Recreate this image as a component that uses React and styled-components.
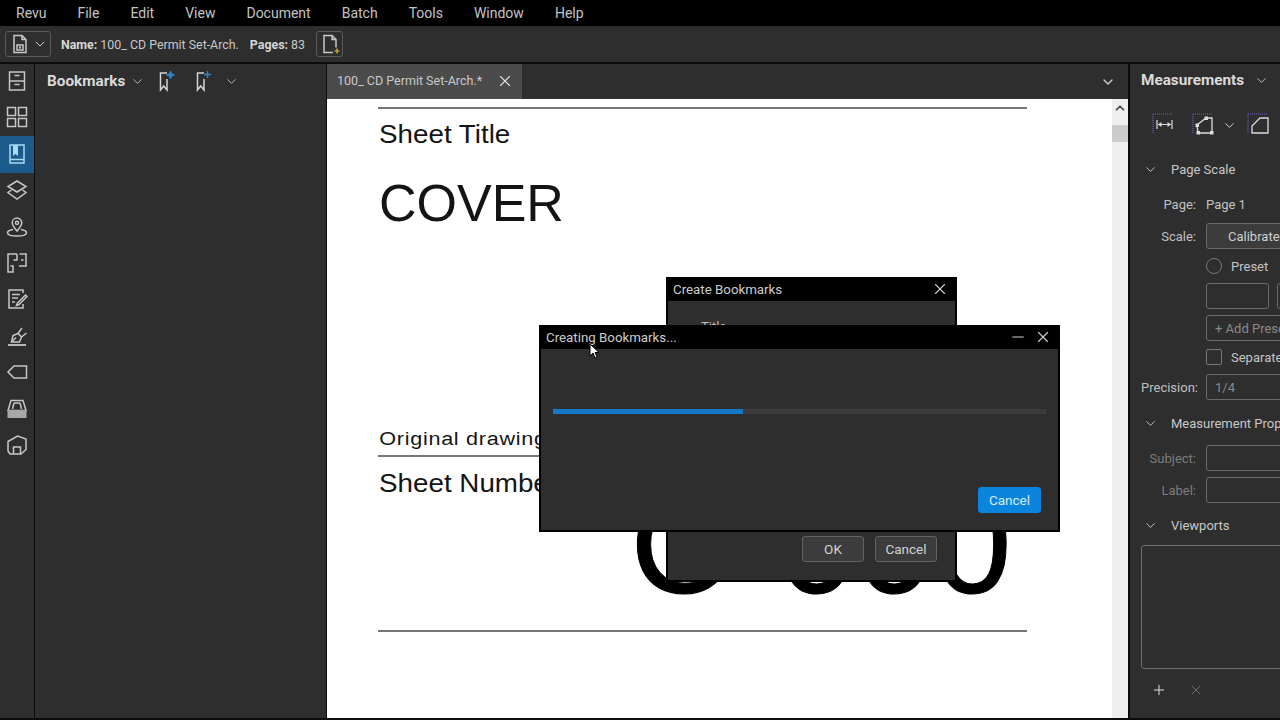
import React from 'react';
import styled, { createGlobalStyle } from 'styled-components';
import { ChevronDown, ChevronUp, X, Plus, Minus } from 'lucide-react';

const GlobalStyle = createGlobalStyle`
  html, body { margin: 0; padding: 0; background: #000; }
  * { box-sizing: border-box; }
`;

const Shell = styled.div`
  position: relative;
  width: 1280px;
  height: 720px;
  overflow: hidden;
  display: flex;
  flex-direction: column;
  background: #0c0c0c;
  color: #cfcfcf;
  font-family: Roboto, "Liberation Sans", sans-serif;
`;

const MenuBar = styled.nav`
  height: 26px;
  background: #000;
  display: flex;
  align-items: center;
  gap: 31px;
  padding: 0 0 0 16px;
  font-size: 14px;
  color: #c4c4c4;
`;

const ToolBar = styled.div`
  height: 36px;
  background: #2e2e2e;
  display: flex;
  align-items: center;
  padding: 0 0 0 5px;
  font-size: 12.4px;
  color: #c8c8c8;
`;

const ToolGroup = styled.div`
  width: ${p => p.$w}px;
  height: 26px;
  border: 1px solid #5a5a5a;
  border-radius: 3px;
  margin-left: ${p => p.$ml || 0}px;
  display: flex;
  align-items: center;
  padding-left: 3px;
  gap: 1px;
`;

const DocInfo = styled.span`
  margin-left: ${p => p.$ml}px;
  white-space: nowrap;
  b { font-weight: 700; color: #d6d6d6; }
`;

const Body = styled.div`
  flex: 1;
  margin: 2px 0;
  display: flex;
  min-height: 0;
`;

const Rail = styled.div`
  width: 34px;
  background: #2e2e2e;
  display: flex;
  flex-direction: column;
`;

const RailItem = styled.div`
  height: ${p => p.$h || 36.4}px;
  padding-bottom: 2px;
  display: flex;
  align-items: center;
  justify-content: center;
  color: ${p => (p.$active ? '#a9d8f5' : '#c6c6c6')};
  background: ${p => (p.$active ? '#1b5a8a' : 'transparent')};
`;

const BookmarksPanel = styled.div`
  width: 291px;
  margin-left: 1px;
  background: #2e2e2e;
`;

const BookmarksHead = styled.div`
  height: 34px;
  display: flex;
  align-items: center;
  padding-left: 12px;
  color: #d4d4d4;
`;

const PanelTitle = styled.span`
  font-size: 15.3px;
  font-weight: 700;
  color: #dadada;
  white-space: nowrap;
`;

const IconSlot = styled.span`
  display: inline-flex;
  flex: none;
  margin-left: ${p => p.$ml || 0}px;
  color: ${p => p.$color || 'inherit'};
`;

const DocColumn = styled.div`
  width: 801px;
  margin-left: 1px;
  display: flex;
  flex-direction: column;
`;

const TabBar = styled.div`
  height: 35px;
  background: #2e2e2e;
  display: flex;
  align-items: center;
  padding-right: 12px;
  justify-content: space-between;
`;

const Tab = styled.div`
  width: 195px;
  height: 35px;
  background: #4b4b4b;
  color: #c9c9c9;
  font-size: 12.5px;
  display: flex;
  align-items: center;
  padding: 0 8px 2px 10px;
  justify-content: space-between;
  white-space: nowrap;
`;

const PageRow = styled.div`
  flex: 1;
  display: flex;
  min-height: 0;
`;

const Page = styled.div`
  flex: 1;
  background: #fff;
  color: #141414;
  font-family: "Liberation Sans", Arial, sans-serif;
  padding: 8px 0 0 51px;
  overflow: hidden;
`;

const Rule = styled.div`
  width: ${p => p.$w || 649}px;
  height: ${p => p.$h || 2}px;
  background: #777;
  margin-top: ${p => p.$mt || 0}px;
`;

/* the sheet's labels are stretched sideways in the PDF */
const SheetLabel = styled.div`
  flex: none;
  font-size: 25px;
  line-height: 30px;
  padding-left: 1px;
  margin-top: ${p => p.$mt || 0}px;
  white-space: nowrap;
  transform: scaleX(1.11);
  transform-origin: left center;
`;

const CoverTitle = styled.div`
  font-size: 52px;
  line-height: 60px;
  margin-top: 24px;
  padding-left: 1px;
`;

const DrawingNote = styled.div`
  font-size: 18px;
  line-height: 24px;
  letter-spacing: 0.6px;
  padding-left: 1px;
  margin-top: 194px;
  white-space: nowrap;
  transform: scaleX(1.2);
  transform-origin: left center;
`;

const NumberRow = styled.div`
  display: flex;
  align-items: flex-start;
  height: 161px;
  margin-top: 11px;
`;

const SheetNumber = styled.div`
  margin-left: 90px;
  margin-top: 7px;
  font-size: 140px;
  line-height: 140px;
  white-space: nowrap;
  color: #000;
  -webkit-text-stroke: 1px #000;
`;

const Scrollbar = styled.div`
  width: 16px;
  background: #eeeeee;
  color: #444;
  display: flex;
  flex-direction: column;
  align-items: center;
  padding-top: 2px;
`;

const ScrollThumb = styled.div`
  width: 16px;
  height: 17px;
  margin-top: 10px;
  background: #cbcbcb;
`;

const RightPanel = styled.div`
  flex: 1;
  margin-left: 2px;
  background: #2e2e2e;
  overflow: hidden;
  padding-left: 11px;
  font-size: 13px;
  color: #c4c4c4;
`;

const RightHead = styled.div`
  height: 32px;
  display: flex;
  align-items: center;
  white-space: nowrap;
`;

const MeasureBar = styled.div`
  height: 34px;
  margin-top: 12px;
  padding-left: 11px;
  display: flex;
  align-items: center;
  color: #dcdcdc;
`;

const Section = styled.div`
  height: 22px;
  margin-top: ${p => p.$mt}px;
  display: flex;
  align-items: center;
  gap: 13px;
  padding-left: 2px;
  color: #c8c8c8;
  white-space: nowrap;
`;

const FieldRow = styled.div`
  height: ${p => p.$h || 26}px;
  margin-top: ${p => p.$mt}px;
  display: grid;
  grid-template-columns: 55px 200px;
  column-gap: 10px;
  align-items: center;
  white-space: nowrap;
`;

const FieldLabel = styled.span`
  text-align: right;
  color: ${p => (p.$muted ? '#7d7d7d' : '#c0c0c0')};
`;

const Field = styled.div`
  height: 26px;
  width: ${p => p.$w || 200}px;
  border: 1px solid #6a6a6a;
  border-radius: 3px;
  background: ${p => (p.$fill ? '#3c3c3c' : 'transparent')};
  color: ${p => p.$color || '#8a8a8a'};
  display: flex;
  align-items: center;
  padding-left: ${p => p.$pad ?? 8}px;
`;

const FieldPair = styled.div`
  display: flex;
  gap: 8px;
`;

const Option = styled.div`
  display: flex;
  align-items: center;
  gap: 9px;
`;

const Radio = styled.span`
  width: 16px;
  height: 16px;
  border-radius: 50%;
  border: 1px solid #777;
`;

const Check = styled.span`
  width: 16px;
  height: 16px;
  border-radius: 2px;
  border: 1px solid #777;
`;

const ListBox = styled.div`
  width: 220px;
  height: 124px;
  margin-top: 9px;
  border: 1px solid #6f6f6f;
  border-radius: 3px;
`;

const ListActions = styled.div`
  height: 22px;
  margin-top: 10px;
  display: flex;
  align-items: center;
  gap: 21px;
  padding-left: 10px;
  color: #e0e0e0;
`;

const Dialog = styled.div`
  position: absolute;
  left: ${p => p.$x}px;
  top: ${p => p.$y}px;
  width: ${p => p.$w}px;
  height: ${p => p.$h}px;
  background: #2e2e2e;
  border: 2px solid #000;
  border-top: 0;
  display: flex;
  flex-direction: column;
`;

const DialogTitle = styled.div`
  height: 24px;
  flex: none;
  margin: 0 -2px;
  background: #000;
  color: #cdcdcd;
  font-size: 13.3px;
  display: flex;
  align-items: center;
  justify-content: space-between;
  padding: 0 8px 0 7px;
`;

const TitleIcons = styled.span`
  display: flex;
  align-items: center;
  gap: 7px;
  color: #d0d0d0;
`;

const PeekText = styled.div`
  height: 0;
  overflow: visible;
  padding-left: 33px;
  margin-top: 18px;
  font-size: 13px;
  color: #bdbdbd;
`;

const Progress = styled.div`
  height: 5px;
  margin: 60px 12px 0 12px;
  background: #3b3b3b;
`;

const ProgressFill = styled.div`
  height: 100%;
  background: #1479c6;
`;

const DialogFoot = styled.div`
  margin-top: auto;
  display: flex;
  justify-content: flex-end;
  gap: 11px;
  padding: 0 ${p => p.$pr}px ${p => p.$pb}px 0;
`;

const DialogButton = styled.button`
  width: ${p => p.$w}px;
  height: 26px;
  padding: 0;
  border: 1px solid ${p => (p.$primary ? '#0a84dc' : '#626262')};
  border-radius: 3px;
  background: ${p => (p.$primary ? '#0a84dc' : '#3c3c3c')};
  color: ${p => (p.$primary ? '#d8ecfa' : '#d2d2d2')};
  font: 13.5px Roboto, "Liberation Sans", sans-serif;
`;

const Pointer = styled.svg`
  position: absolute;
  left: 589px;
  top: 343px;
`;

const Icon = ({ children, size = 22, box = 22, ...rest }) => (
  <svg width={size} height={size} viewBox={`0 0 ${box} ${box}`} fill="none" stroke="currentColor" strokeWidth="1.5" {...rest}>
    {children}
  </svg>
);

const CabinetIcon = () => (
  <Icon>
    <rect x="3.500" y="2" width="15" height="18" />
    <path d="M3.500 11h15M8.500 5.500h5M8.500 14.500h5" />
  </Icon>
);
const GridIcon = () => (
  <Icon>
    <rect x="1.500" y="1.500" width="8" height="8" />
    <rect x="12.500" y="1.500" width="8" height="8" />
    <rect x="1.500" y="12.500" width="8" height="8" />
    <rect x="12.500" y="12.500" width="8" height="8" />
  </Icon>
);
const BookIcon = () => (
  <Icon>
    <rect x="4" y="2" width="14" height="18" />
    <path d="M7 2v11l2.500-2 2.500 2V2" fill="#a9d8f5" stroke="none" />
    <path d="M4 16.500h14" />
  </Icon>
);
const LayersIcon = () => (
  <Icon>
    <path d="M11 2l9 5.500-9 5.500-9-5.500z" />
    <path d="M5.500 11L2 13.500 11 20l9-6.500-3.500-2.500" />
  </Icon>
);
const PinIcon = () => (
  <Icon>
    <path d="M11 15c-3-3.500-4.800-5.500-4.800-8.200a4.800 4.800 0 0 1 9.600 0c0 2.700-1.800 4.700-4.800 8.200z" />
    <circle cx="11" cy="6.800" r="1.600" />
    <path d="M7 13.500c-3 .5-5.500 1.600-5.500 3.200 0 2 4.200 3.300 9.500 3.300s9.500-1.300 9.500-3.300c0-1.600-2.500-2.700-5.500-3.200" />
  </Icon>
);
const PlanIcon = () => (
  <Icon>
    <path d="M11 2H2v18h5v-6H4.500M13.500 2H20v12h-7M16 14h-.5M11 2v6H7.500M15 8h2.500" />
  </Icon>
);
const NotesIcon = () => (
  <Icon>
    <path d="M17 5V2H3v18h14v-4" />
    <path d="M6 6.500h8M6 10h6M6 14h3" />
    <path d="M11.500 15l8-8 1.500 1.500-8 8-2.500 1z" />
  </Icon>
);
const PenIcon = () => (
  <Icon>
    <path d="M2 20h18" strokeWidth="1.800" />
    <path d="M5.500 17l1.500-6.500 5-2 3.500 3.500-2 5z" />
    <path d="M12 8.500l4-5.500M15.500 12l5-4" />
    <path d="M5.500 17l4.500-4.500" />
  </Icon>
);
const TagIcon = () => (
  <Icon>
    <path d="M20.500 5H8l-6 6 6 6h12.500z" />
  </Icon>
);
const TrayIcon = () => (
  <Icon>
    <path d="M5 2.500h12l3 10H2z" />
    <path d="M6.500 11l1.500-6M15.500 11l-1.500-6M8 5h6" />
    <rect x="1.500" y="12" width="19" height="8" fill="#a8a8a8" stroke="none" />
  </Icon>
);
const PartIcon = () => (
  <Icon>
    <path d="M2 7.500L11.500 2 20 5v10.500L15 20H4l-2-3z" />
    <path d="M7.500 20v-7h7v7" />
  </Icon>
);

const DocSaveIcon = () => (
  <Icon>
    <path d="M5 2.500h8l4 4v13H5z" />
    <path d="M13 2.500v4h4" />
    <rect x="8" y="12" width="6" height="5" />
    <rect x="10" y="13.500" width="2" height="2" fill="currentColor" stroke="none" />
  </Icon>
);

const DocNewIcon = () => (
  <Icon>
    <path d="M14 19.500H5v-17h8l4 4v8" />
    <path d="M13 2.500v4h4" />
    <path d="M18 15.500v5M15.500 18h5" stroke="#b99d3a" strokeWidth="1.600" />
  </Icon>
);

const BookmarkStarIcon = () => (
  <Icon>
    <path d="M12 3H5.500v17l3.250-4 3.250 4V9" />
    <path d="M15.500 1l1.100 2.900 2.900 1.100-2.900 1.100-1.100 2.900-1.100-2.900-2.900-1.100 2.900-1.100z" fill="#2d86c9" stroke="#2d86c9" strokeWidth="1" />
  </Icon>
);

const BookmarkPlusIcon = () => (
  <Icon>
    <path d="M12 3H5.500v17l3.250-4 3.250 4V9" />
    <path d="M15.500 1v7M12 4.500h7" stroke="#2d86c9" />
  </Icon>
);

const Corners = () => (
  <g stroke="#6a60c0" strokeWidth="1.200" strokeDasharray="1 1">
    <path d="M1 1v19M1 1h20" />
  </g>
);

const MeasureLengthIcon = () => (
  <Icon size={24} box={24}>
    <Corners />
    <path d="M5 7v9M20 7v9M6 11.500h13" strokeWidth="1.200" />
    <path d="M6 11.500l3.500-2.500v5zM19 11.500L15.500 9v5z" fill="currentColor" stroke="none" />
  </Icon>
);

const MeasurePolyIcon = () => (
  <Icon size={24} box={24}>
    <Corners />
    <path d="M5 12l9-7h6v15H6z" strokeWidth="1.300" />
    <rect x="3.500" y="10.500" width="3.500" height="3.500" fill="currentColor" stroke="none" />
    <rect x="12.500" y="3.500" width="3.500" height="3.500" fill="currentColor" stroke="none" />
    <rect x="18" y="18" width="3.500" height="3.500" fill="currentColor" stroke="none" />
    <rect x="4.500" y="18" width="3.500" height="3.500" fill="currentColor" stroke="none" />
  </Icon>
);

const MeasureAreaIcon = () => (
  <Icon size={24} box={24}>
    <Corners />
    <path d="M5 20v-7l8-8h8v15z" strokeWidth="1.300" />
  </Icon>
);

const App = () => (
  <>
    <GlobalStyle />
    <Shell>
      <MenuBar>
        {['Revu', 'File', 'Edit', 'View', 'Document', 'Batch', 'Tools', 'Window', 'Help'].map(item => (
          <span key={item}>{item}</span>
        ))}
      </MenuBar>

      <ToolBar>
        <ToolGroup $w={46}>
          <DocSaveIcon />
          <ChevronDown size={16} strokeWidth={1.5} />
        </ToolGroup>
        <DocInfo $ml={10}><b>Name:</b> 100_ CD Permit Set-Arch.</DocInfo>
        <DocInfo $ml={11}><b>Pages:</b> 83</DocInfo>
        <ToolGroup $w={27} $ml={11}>
          <IconSlot $ml={-1}><DocNewIcon /></IconSlot>
        </ToolGroup>
      </ToolBar>

      <Body>
        <Rail>
          <RailItem $h={35}><CabinetIcon /></RailItem>
          <RailItem $h={37}><GridIcon /></RailItem>
          <RailItem $active $h={37}><BookIcon /></RailItem>
          <RailItem><LayersIcon /></RailItem>
          <RailItem><PinIcon /></RailItem>
          <RailItem><PlanIcon /></RailItem>
          <RailItem><NotesIcon /></RailItem>
          <RailItem><PenIcon /></RailItem>
          <RailItem><TagIcon /></RailItem>
          <RailItem><TrayIcon /></RailItem>
          <RailItem><PartIcon /></RailItem>
        </Rail>

        <BookmarksPanel>
          <BookmarksHead>
            <PanelTitle>Bookmarks</PanelTitle>
            <IconSlot $ml={5}><ChevronDown size={15} strokeWidth={1.3} /></IconSlot>
            <IconSlot $ml={10}><BookmarkStarIcon /></IconSlot>
            <IconSlot $ml={15}><BookmarkPlusIcon /></IconSlot>
            <IconSlot $ml={10}><ChevronDown size={15} strokeWidth={1.3} /></IconSlot>
          </BookmarksHead>
        </BookmarksPanel>

        <DocColumn>
          <TabBar>
            <Tab>
              100_ CD Permit Set-Arch.*
              <X size={18} strokeWidth={1.5} color="#dedede" />
            </Tab>
            <ChevronDown size={16} strokeWidth={2} color="#d0d0d0" />
          </TabBar>
          <PageRow>
            <Page>
              <Rule />
              <SheetLabel $mt={10}>Sheet Title</SheetLabel>
              <CoverTitle>COVER</CoverTitle>
              <DrawingNote>Original drawing</DrawingNote>
              <Rule $mt={4} />
              <NumberRow>
                <SheetLabel>Sheet Number</SheetLabel>
                <SheetNumber>C-000</SheetNumber>
              </NumberRow>
              <Rule $mt={1} />
            </Page>
            <Scrollbar>
              <ChevronUp size={14} strokeWidth={3} />
              <ScrollThumb />
            </Scrollbar>
          </PageRow>
        </DocColumn>

        <RightPanel>
          <RightHead>
            <PanelTitle>Measurements</PanelTitle>
            <IconSlot $ml={10}><ChevronDown size={15} strokeWidth={1.5} /></IconSlot>
          </RightHead>
          <MeasureBar>
            <MeasureLengthIcon />
            <IconSlot $ml={16}><MeasurePolyIcon /></IconSlot>
            <IconSlot $ml={6}><ChevronDown size={15} strokeWidth={1.5} /></IconSlot>
            <IconSlot $ml={10}><MeasureAreaIcon /></IconSlot>
          </MeasureBar>

          <Section $mt={16}><IconSlot><ChevronDown size={15} strokeWidth={1.5} /></IconSlot>Page Scale</Section>
          <FieldRow $h={22} $mt={13}>
            <FieldLabel>Page:</FieldLabel>
            <span>Page 1</span>
          </FieldRow>
          <FieldRow $mt={8}>
            <FieldLabel>Scale:</FieldLabel>
            <Field $fill $color="#cfcfcf" $pad={21}>Calibrate</Field>
          </FieldRow>
          <FieldRow $h={22} $mt={6}>
            <span />
            <Option><Radio />Preset</Option>
          </FieldRow>
          <FieldRow $mt={6}>
            <span />
            <FieldPair>
              <Field $w={63} />
              <Field $w={63} />
            </FieldPair>
          </FieldRow>
          <FieldRow $mt={6}>
            <span />
            <Field>+ Add Preset</Field>
          </FieldRow>
          <FieldRow $h={22} $mt={5}>
            <span />
            <Option><Check />Separate</Option>
          </FieldRow>
          <FieldRow $mt={6}>
            <FieldLabel>Precision:</FieldLabel>
            <Field>1/4</Field>
          </FieldRow>

          <Section $mt={12}><IconSlot><ChevronDown size={15} strokeWidth={1.5} /></IconSlot>Measurement Properties</Section>
          <FieldRow $mt={11}>
            <FieldLabel $muted>Subject:</FieldLabel>
            <Field />
          </FieldRow>
          <FieldRow $mt={6}>
            <FieldLabel $muted>Label:</FieldLabel>
            <Field />
          </FieldRow>

          <Section $mt={11}><IconSlot><ChevronDown size={15} strokeWidth={1.5} /></IconSlot>Viewports</Section>
          <ListBox />
          <ListActions>
            <Plus size={16} strokeWidth={1.5} />
            <IconSlot $color="#6b6b6b"><X size={16} strokeWidth={1.5} /></IconSlot>
          </ListActions>
        </RightPanel>
      </Body>

      <Dialog $x={666} $y={277} $w={291} $h={305}>
        <DialogTitle>
          Create Bookmarks
          <TitleIcons><X size={18} strokeWidth={1.5} /></TitleIcons>
        </DialogTitle>
        <PeekText>Title</PeekText>
        <DialogFoot $pr={18} $pb={18}>
          <DialogButton $w={62}>OK</DialogButton>
          <DialogButton $w={62}>Cancel</DialogButton>
        </DialogFoot>
      </Dialog>

      <Dialog $x={539} $y={325} $w={521} $h={207}>
        <DialogTitle>
          Creating Bookmarks...
          <TitleIcons>
            <Minus size={18} strokeWidth={1.5} />
            <X size={18} strokeWidth={1.5} />
          </TitleIcons>
        </DialogTitle>
        <Progress>
          <ProgressFill style={{ width: `${(190 / 493) * 100}%` }} />
        </Progress>
        <DialogFoot $pr={17} $pb={17}>
          <DialogButton $primary $w={63}>Cancel</DialogButton>
        </DialogFoot>
      </Dialog>

      <Pointer width="11" height="17" viewBox="0 0 11 17">
        <path d="M1 1v12l3-3 2 5 2-1-2-4.500h4z" fill="#fff" stroke="#000" strokeWidth="1" />
      </Pointer>
    </Shell>
  </>
);

export default App;
